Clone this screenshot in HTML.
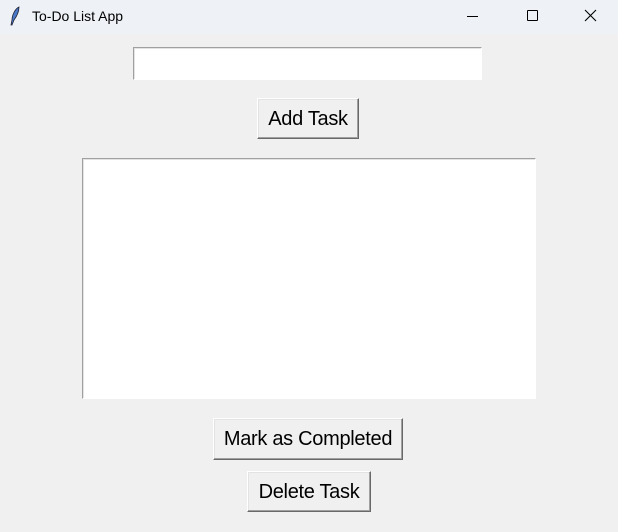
<!DOCTYPE html>
<html><head><style>
body{margin:0;width:618px;height:532px;background:#f0f0f0;font-family:"Liberation Sans",Arial,sans-serif;position:relative;overflow:hidden}
.tb{position:absolute;left:0;top:0;width:618px;height:34px;background:#eef2f7}
.tt{position:absolute;left:32px;top:8px;font-size:14px;color:#000}
.abs{position:absolute;box-sizing:border-box}
.btn{position:absolute;box-sizing:border-box;background:#f0f0f0;border:1px solid;border-color:#fff #696969 #696969 #fff;box-shadow:inset -1px -1px 0 #a0a0a0,inset 1px 1px 0 #e3e3e3;font-size:20px;color:#000;text-align:center;line-height:41px;letter-spacing:-0.3px}
.field{background:#fff;border:1px solid;border-color:#a0a0a0 #fff #fff #a0a0a0;box-shadow:inset 1px 1px 0 #e3e3e3}
</style></head><body>
<div class="tb">
<svg class="abs" style="left:9px;top:6px" width="12" height="20" viewBox="0 0 12 20"><path d="M10 1 C6 3 3 9 3 14 L2 19 L3 19 L5 14 C8 10 10 5 10 1Z" fill="#4a78c8" stroke="#223" stroke-width="0.8"/></svg>
<div class="tt">To-Do List App</div>
<div class="abs" style="left:467px;top:16px;width:11px;height:1px;background:#000"></div>
<div class="abs" style="left:527px;top:10px;width:11px;height:11px;border:1px solid #000;border-radius:1px"></div>
<svg class="abs" style="left:584px;top:9px" width="13" height="13" viewBox="0 0 13 13"><path d="M1 1L12 12M12 1L1 12" stroke="#000" stroke-width="1.1"/></svg>
</div>
<div class="abs field" style="left:133px;top:47px;width:349px;height:33px"></div>
<div class="btn" style="left:257px;top:98px;width:102px;height:41px">Add Task</div>
<div class="abs field" style="left:82px;top:158px;width:454px;height:241px"></div>
<div class="btn" style="left:213px;top:418px;width:190px;height:42px">Mark as Completed</div>
<div class="btn" style="left:247px;top:471px;width:124px;height:41px">Delete Task</div>
</body></html>
